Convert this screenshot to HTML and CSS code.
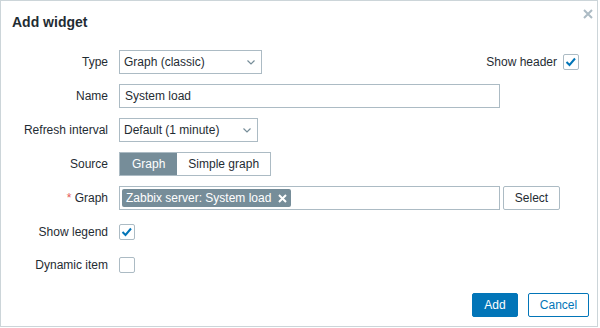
FILE: index.html
```html
<!DOCTYPE html>
<html lang="en">
<head>
  <meta charset="UTF-8" />
  <title>Add widget</title>
  <link rel="stylesheet" href="styles.css">
</head>
<body>
  <div class="dialog">
    <div class="dialog-head">
      <h4>Add widget</h4>
      <span class="close-btn">
        <svg width="10" height="10" viewBox="0 0 10 10"><path d="M1 1 L9 9 M9 1 L1 9" stroke="#acbbc4" stroke-width="2"/></svg>
      </span>
    </div>

    <div class="dialog-body">
      <div class="form-grid">
        <label>Type</label>
        <div class="row-line">
          <div class="dropdown type-select">
            <span>Graph (classic)</span>
            <svg class="chevron" width="8" height="5" viewBox="0 0 8 5"><path d="M0.5 0.5 L4 4 L7.5 0.5" fill="none" stroke="#768d99" stroke-width="1.2"/></svg>
          </div>
          <div class="show-header">
            <span>Show header</span>
            <span class="checkbox checked">
              <svg width="14" height="14" viewBox="0 0 14 14"><path d="M2.5 7 L5.5 10 L11 3.5" fill="none" stroke="#0275b8" stroke-width="2"/></svg>
            </span>
          </div>
        </div>

        <label>Name</label>
        <div><input type="text" class="text-input" value="System load" /></div>

        <label>Refresh interval</label>
        <div>
          <div class="dropdown refresh-select">
            <span>Default (1 minute)</span>
            <svg class="chevron" width="8" height="5" viewBox="0 0 8 5"><path d="M0.5 0.5 L4 4 L7.5 0.5" fill="none" stroke="#768d99" stroke-width="1.2"/></svg>
          </div>
        </div>

        <label>Source</label>
        <div>
          <div class="radio-seg">
            <span class="seg active">Graph</span>
            <span class="seg">Simple graph</span>
          </div>
        </div>

        <label><span class="required">*</span> Graph</label>
        <div class="row-line">
          <div class="multiselect">
            <span class="tag">
              Zabbix server: System load
              <svg width="9" height="9" viewBox="0 0 9 9"><path d="M1 1 L8 8 M8 1 L1 8" stroke="#ffffff" stroke-width="2"/></svg>
            </span>
          </div>
          <button class="btn-grey">Select</button>
        </div>

        <label class="check-label">Show legend</label>
        <div class="check-row">
          <span class="checkbox checked">
            <svg width="14" height="14" viewBox="0 0 14 14"><path d="M2.5 7 L5.5 10 L11 3.5" fill="none" stroke="#0275b8" stroke-width="2"/></svg>
          </span>
        </div>

        <label class="check-label">Dynamic item</label>
        <div class="check-row">
          <span class="checkbox"></span>
        </div>
      </div>
    </div>

    <div class="dialog-foot">
      <button class="btn-primary">Add</button>
      <button class="btn-alt">Cancel</button>
    </div>
  </div>
</body>
</html>
```

FILE: styles.css
```css
body {
  margin: 0;
  font-family: 'Liberation Sans', Arial, sans-serif;
  font-size: 12px;
  color: #1f2c33;
  background-color: #ffffff;
}
.dialog {
  width: 598px;
  height: 327px;
  box-sizing: border-box;
  border: 1px solid #ccd5d9;
  display: flex;
  flex-direction: column;
  position: relative;
}
.dialog-head {
  padding: 13px 11px 11px;
}
.dialog-head h4 {
  margin: 0;
  font-size: 14px;
  font-weight: bold;
  line-height: 16px;
  color: #1f2c33;
}
.close-btn {
  position: absolute;
  top: 8px;
  right: 4px;
  width: 10px;
  height: 10px;
  display: flex;
}
.dialog-body {
  flex: 1;
  padding: 9px 18px 0 10px;
}
.form-grid {
  display: grid;
  grid-template-columns: 97px 1fr;
  column-gap: 11px;
  row-gap: 10px;
  align-items: center;
}
.form-grid label {
  text-align: right;
  white-space: nowrap;
}
label span.required {
  color: #e45959;
}
.row-line {
  display: flex;
  align-items: center;
}
.dropdown {
  height: 24px;
  box-sizing: border-box;
  border: 1px solid #acbbc4;
  background-color: #ffffff;
  display: flex;
  align-items: center;
  justify-content: space-between;
  padding: 0 6px 0 4px;
}
.type-select {
  width: 143px;
}
.refresh-select {
  width: 139px;
}
.show-header {
  margin-left: auto;
  display: flex;
  align-items: center;
  gap: 6px;
}
.text-input {
  width: 381px;
  height: 24px;
  box-sizing: border-box;
  border: 1px solid #acbbc4;
  padding: 0 5px;
  font-family: inherit;
  font-size: 12px;
  color: #1f2c33;
  outline: none;
}
.radio-seg {
  display: inline-flex;
  height: 24px;
  box-sizing: border-box;
  border: 1px solid #acbbc4;
}
.seg {
  display: flex;
  align-items: center;
  padding: 0 11px;
}
.seg.active {
  background-color: #768d99;
  color: #ffffff;
  padding: 0 12px;
}
.multiselect {
  width: 381px;
  height: 24px;
  box-sizing: border-box;
  border: 1px solid #acbbc4;
  padding: 2px;
  display: flex;
  align-items: center;
}
.tag {
  display: inline-flex;
  align-items: center;
  gap: 7px;
  height: 18px;
  padding: 0 4px 0 4px;
  background-color: #768d99;
  color: #ffffff;
  border-radius: 2px;
}
.btn-grey {
  margin-left: 3px;
  height: 24px;
  width: 57px;
  border: 1px solid #acbbc4;
  border-radius: 2px;
  background-color: #ffffff;
  color: #1f2c33;
  font-family: inherit;
  font-size: 12px;
  padding: 0;
}
.check-row,
.check-label {
  height: 23px;
  display: flex;
  align-items: center;
}
.form-grid .check-label {
  justify-content: flex-end;
}
.checkbox {
  width: 16px;
  height: 16px;
  box-sizing: border-box;
  border: 1px solid #acbbc4;
  border-radius: 2px;
  background-color: #ffffff;
  display: inline-flex;
  align-items: center;
  justify-content: center;
}
.dialog-foot {
  display: flex;
  justify-content: flex-end;
  gap: 10px;
  padding: 0 8px 9px 0;
}
.btn-primary, .btn-alt {
  height: 24px;
  border-radius: 2px;
  font-family: inherit;
  font-size: 12px;
  padding: 0;
}
.btn-primary {
  width: 46px;
  border: 1px solid #0275b8;
  background-color: #0275b8;
  color: #ffffff;
}
.btn-alt {
  width: 61px;
  border: 1px solid #0275b8;
  background-color: #ffffff;
  color: #0275b8;
}
```
